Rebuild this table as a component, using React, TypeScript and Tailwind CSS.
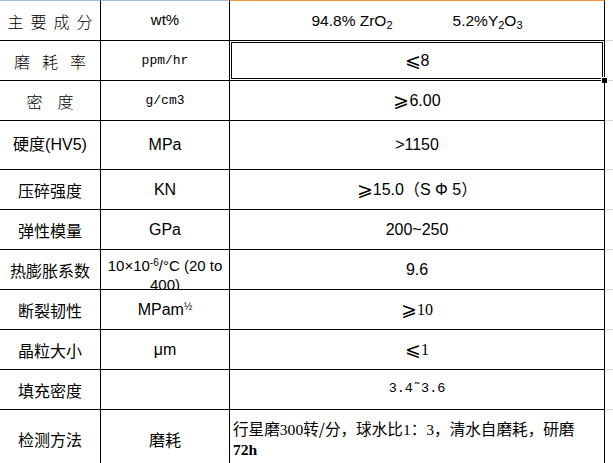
import React from "react";

const sans = "font-['Liberation_Sans','Noto_Sans_CJK_SC',sans-serif]";
const cjk = "font-['Noto_Sans_CJK_SC',sans-serif]";
const serif = "font-['Liberation_Serif','Noto_Sans_CJK_SC',serif]";
const mono = "font-['Liberation_Mono','Noto_Sans_CJK_SC',monospace]";
const sym = "font-['DejaVu_Sans',sans-serif]";

type Row = {
  h: string;
  c1: React.ReactNode;
  c2: React.ReactNode;
  c3: React.ReactNode;
  first?: boolean;
  last?: boolean;
  selected?: boolean;
  c2Top?: boolean;
  c3Left?: boolean;
};

const Le = () => <span className={`${sym} text-[19px] leading-none font-light`}>⩽</span>;
const Ge = () => <span className={`${sym} text-[19px] leading-none font-light`}>⩾</span>;

const rows: Row[] = [
  {
    h: "h-[41px]",
    first: true,
    c1: (
      <span className={`${cjk} text-[16px] flex gap-[7px] font-light`}>
        <span>主</span>
        <span>要</span>
        <span>成</span>
        <span>分</span>
      </span>
    ),
    c2: <span className={`${sans} text-[15px]`}>wt%</span>,
    c3: (
      <span className={`${sans} text-[15.5px] flex items-center`}>
        <span>
          94.8% ZrO<sub className="text-[11px]">2</sub>
        </span>
        <span className="w-[60px]" />
        <span>
          5.2%Y<sub className="text-[11px]">2</sub>O<sub className="text-[11px]">3</sub>
        </span>
      </span>
    ),
  },
  {
    h: "h-[40px]",
    selected: true,
    c1: (
      <span className={`${cjk} text-[16px] flex gap-[12px] font-light`}>
        <span>磨</span>
        <span>耗</span>
        <span>率</span>
      </span>
    ),
    c2: <span className={`${mono} text-[13px]`}>ppm/hr</span>,
    c3: (
      <span className="flex items-center">
        <Le />
        <span className={`${sans} text-[16px]`}>8</span>
      </span>
    ),
  },
  {
    h: "h-[40px]",
    c1: (
      <span className={`${cjk} text-[16px] flex gap-[15px] font-light`}>
        <span>密</span>
        <span>度</span>
      </span>
    ),
    c2: <span className={`${mono} text-[13px]`}>g/cm3</span>,
    c3: (
      <span className="flex items-center">
        <Ge />
        <span className={`${sans} text-[16px]`}>6.00</span>
      </span>
    ),
  },
  {
    h: "h-[49px]",
    c1: <span className={`${sans} text-[16px]`}>硬度(HV5)</span>,
    c2: <span className={`${sans} text-[16px]`}>MPa</span>,
    c3: <span className={`${sans} text-[16px]`}>&gt;1150</span>,
  },
  {
    h: "h-[40px]",
    c1: <span className={`${cjk} text-[16px]`}>压碎强度</span>,
    c2: <span className={`${sans} text-[16px]`}>KN</span>,
    c3: (
      <span className="flex items-center">
        <Ge />
        <span className={`${sans} text-[16px]`}>15.0（S Φ 5）</span>
      </span>
    ),
  },
  {
    h: "h-[40px]",
    c1: <span className={`${cjk} text-[16px]`}>弹性模量</span>,
    c2: <span className={`${sans} text-[16px]`}>GPa</span>,
    c3: <span className={`${sans} text-[16px]`}>200~250</span>,
  },
  {
    h: "h-[40px]",
    c2Top: true,
    c1: <span className={`${cjk} text-[16px]`}>热膨胀系数</span>,
    c2: (
      <span className={`${sans} text-[15px] leading-[19px] block text-center`}>
        10×10<sup className="text-[10px]">-6</sup>/°C (20 to 400)
      </span>
    ),
    c3: <span className={`${sans} text-[16px]`}>9.6</span>,
  },
  {
    h: "h-[40px]",
    c1: <span className={`${cjk} text-[16px]`}>断裂韧性</span>,
    c2: (
      <span className={`${sans} text-[16px]`}>
        MPam<sup className="text-[10px]">½</sup>
      </span>
    ),
    c3: (
      <span className="flex items-center">
        <Ge />
        <span className={`${serif} text-[16px]`}>10</span>
      </span>
    ),
  },
  {
    h: "h-[40px]",
    c1: <span className={`${cjk} text-[16px]`}>晶粒大小</span>,
    c2: <span className={`${sans} text-[16px]`}>μm</span>,
    c3: (
      <span className="flex items-center">
        <Le />
        <span className={`${serif} text-[16px]`}>1</span>
      </span>
    ),
  },
  {
    h: "h-[40px]",
    c1: <span className={`${cjk} text-[16px]`}>填充密度</span>,
    c2: null,
    c3: <span className={`${mono} text-[13.5px]`}>3.4˜3.6</span>,
  },
  {
    h: "h-[57px]",
    last: true,
    c3Left: true,
    c1: <span className={`${cjk} text-[16px]`}>检测方法</span>,
    c2: <span className={`${cjk} text-[16px]`}>磨耗</span>,
    c3: (
      <span className={`${serif} text-[15.6px] leading-[20px] block`}>
        <span className={cjk}>行星磨</span>300<span className={cjk}>转/分，球水比</span>1<span className={cjk}>：</span>3<span className={cjk}>，清水自磨耗，研磨</span> <b className="font-bold">72h</b>
      </span>
    ),
  },
];

export default function App() {
  return (
    <div className="w-[613px] h-[463px] overflow-hidden bg-white text-black">
      {rows.map((r, i) => {
        const bb = r.last ? "" : "border-b border-black";
        return (
          <div key={i} className={`flex ${r.h}`}>
            <div
              className={`w-[101px] shrink-0 flex items-center justify-center border-r border-black ${bb} ${
                r.first ? "border-t border-t-[#a6bcd8]" : ""
              }`}
            >
              {r.c1}
            </div>
            <div
              className={`w-[129px] shrink-0 flex justify-center border-r border-black overflow-hidden px-[2px] ${
                r.c2Top ? "items-start pt-[6px]" : "items-center"
              } ${bb} ${r.first ? "border-t border-t-[#a6bcd8]" : ""}`}
            >
              {r.c2}
            </div>
            <div
              className={`relative w-[375px] shrink-0 flex border-r border-black ${
                r.c3Left ? "items-center justify-start pl-[3px] pr-[20px]" : "items-center justify-center"
              } ${bb} ${r.first ? "border-t border-t-[#f2953a]" : ""}`}
            >
              {r.c3}
              {r.selected && (
                <>
                  <div className="absolute left-[1px] top-[1px] right-[1px] bottom-[1px] border border-black pointer-events-none" />
                  <div className="absolute right-[-4px] bottom-[-4px] w-[7px] h-[7px] bg-black border border-white" />
                </>
              )}
            </div>
            <div
              className={`flex-1 ${r.first ? "border-t border-t-white" : ""} ${
                r.last ? "" : "border-b border-b-[#d0d7e5]"
              }`}
            />
          </div>
        );
      })}
    </div>
  );
}
